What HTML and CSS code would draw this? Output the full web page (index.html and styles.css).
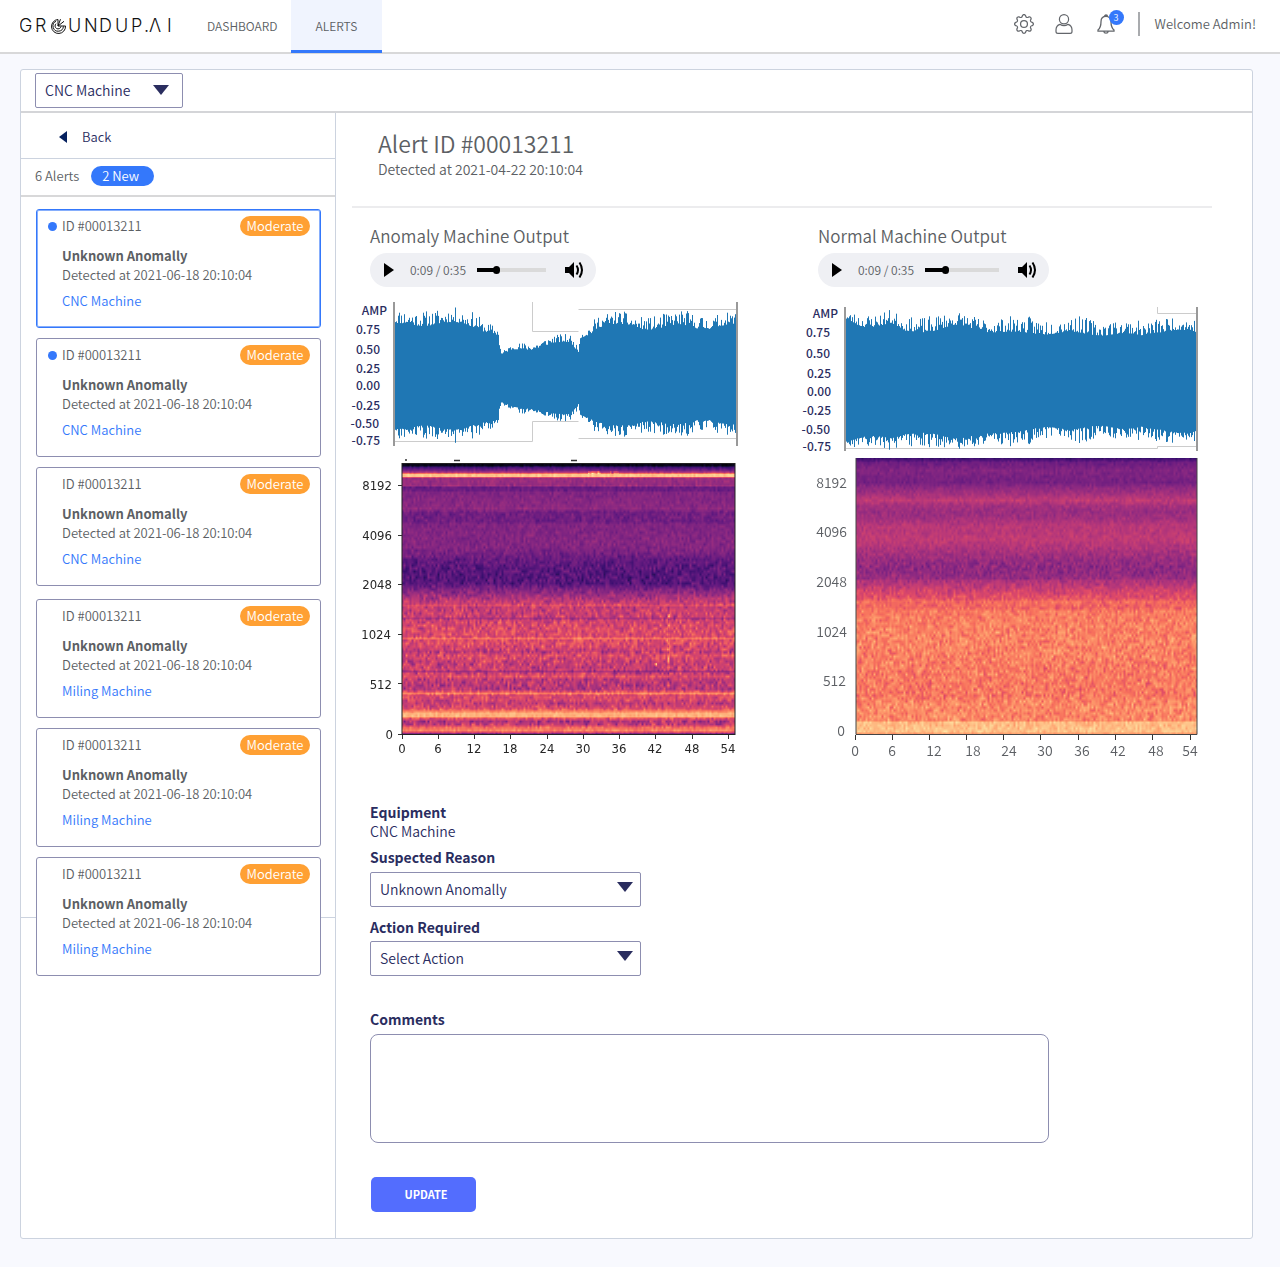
FILE: index.html
```html
<!DOCTYPE html>
<html lang="en">
<head>
<meta charset="utf-8">
<meta name="viewport" content="width=device-width, initial-scale=1">
<title>Groundup.AI – Alerts</title>
<link rel="stylesheet" href="styles.css">
</head>
<body>
<header class="topbar">
  <a class="logo" href="#" aria-label="GROUNDUP.AI">
    <svg width="154" height="20" viewBox="0 0 154 20">
      <text class="wordmark" y="15" x="-1 15">GR</text>
      <g fill="none" stroke="#111" stroke-width="1">
        <path d="M38 2.500a7 7 0 1 0 7.500 6.500h-7.500"/>
        <path d="M36 4.300a5.200 5.200 0 1 0 7.400 5"/>
        <path d="M36 6.700a3 3 0 1 0 5 2.800"/>
        <path d="M38 2.500v6.500M40.500 2.200L38 9M44 4.300L38 9"/>
      </g>
      <text class="wordmark" y="15" x="48 64 79 95 111 124 129 147">UNDUP.ΛI</text>
    </svg>
  </a>
  <nav class="tabs">
    <a class="tab" href="#">DASHBOARD</a>
    <a class="tab tab-active" href="#" aria-current="page">ALERTS</a>
  </nav>
  <div class="account">
    <button class="icon-button" aria-label="Settings">
      <svg width="20" height="20" viewBox="0 0 16 16" fill="#63666b"><path d="M8 4.754a3.246 3.246 0 1 0 0 6.492 3.246 3.246 0 0 0 0-6.492M5.754 8a2.246 2.246 0 1 1 4.492 0 2.246 2.246 0 0 1-4.492 0"/><path d="M9.796 1.343c-.527-1.790-3.065-1.790-3.592 0l-.094.319a.873.873 0 0 1-1.255.520l-.292-.160c-1.640-.892-3.433.902-2.540 2.541l.159.292a.873.873 0 0 1-.520 1.255l-.319.094c-1.790.527-1.790 3.065 0 3.592l.319.094a.873.873 0 0 1 .520 1.255l-.160.292c-.892 1.640.901 3.434 2.541 2.540l.292-.159a.873.873 0 0 1 1.255.520l.094.319c.527 1.790 3.065 1.790 3.592 0l.094-.319a.873.873 0 0 1 1.255-.520l.292.160c1.640.893 3.434-.902 2.540-2.541l-.159-.292a.873.873 0 0 1 .520-1.255l.319-.094c1.790-.527 1.790-3.065 0-3.592l-.319-.094a.873.873 0 0 1-.520-1.255l.160-.292c.893-1.640-.902-3.433-2.541-2.540l-.292.159a.873.873 0 0 1-1.255-.520zm-2.633.283c.246-.835 1.428-.835 1.674 0l.094.319a1.873 1.873 0 0 0 2.693 1.115l.291-.160c.764-.415 1.600.420 1.184 1.185l-.159.292a1.873 1.873 0 0 0 1.116 2.692l.318.094c.835.246.835 1.428 0 1.674l-.319.094a1.873 1.873 0 0 0-1.115 2.693l.160.291c.415.764-.420 1.600-1.185 1.184l-.291-.159a1.873 1.873 0 0 0-2.693 1.116l-.094.318c-.246.835-1.428.835-1.674 0l-.094-.319a1.873 1.873 0 0 0-2.692-1.115l-.292.160c-.764.415-1.600-.420-1.184-1.185l.159-.291A1.873 1.873 0 0 0 1.945 8.930l-.319-.094c-.835-.246-.835-1.428 0-1.674l.319-.094A1.873 1.873 0 0 0 3.060 4.377l-.160-.292c-.415-.764.420-1.600 1.185-1.184l.292.159a1.873 1.873 0 0 0 2.692-1.115z"/></svg>
    </button>
    <button class="icon-button" aria-label="Profile">
      <svg width="20" height="20" viewBox="0 0 20 20" fill="none" stroke="#63666b" stroke-width="1.200"><circle cx="10" cy="5.200" r="4.600"/><path d="M6 10.300C3.500 11 2 13 2 16v1.500c0 1.200.7 1.900 1.900 1.900h12.200c1.200 0 1.900-.7 1.900-1.900V16c0-3-1.500-5-4-5.700-2.400 1.700-5.600 1.700-8 0z"/></svg>
    </button>
    <button class="icon-button bell" aria-label="Notifications, 3 new">
      <svg width="20" height="20" viewBox="0 0 20 20" fill="none" stroke="#63666b" stroke-width="1.300"><path d="M8.500 2.500a1.500 1.500 0 0 1 3 0M10 2.400c-3.200 0-5 2.300-5 5.300 0 4.800-.9 6.500-3 8.400v1h16v-1c-2.100-1.900-3-3.600-3-8.400 0-3-1.800-5.300-5-5.300zM7.800 17.300c.3 2.500 4.100 2.500 4.400 0"/></svg>
      <span class="bell-count">3</span>
    </button>
    <span class="welcome">Welcome Admin!</span>
  </div>
</header>

<main class="panel">
  <div class="toolbar">
    <select class="select select-machine" aria-label="Machine"><option>CNC Machine</option><option>Miling Machine</option></select>
  </div>
  <div class="columns">
    <aside class="sidebar">
      <a class="back" href="#"><svg width="8" height="12" viewBox="0 0 8 12"><path d="M8 0v12L0 6z" fill="#06215f"/></svg>Back</a>
      <div class="summary"><span>6 Alerts</span><span class="new-pill">2 New</span></div>
      <div class="cards">
        <div class="card-group">
          <article class="card card-selected">
            <div class="card-top"><i class="dot"></i><span class="card-id">ID #00013211</span><span class="severity">Moderate</span></div>
            <h3>Unknown Anomally</h3><p>Detected at 2021-06-18 20:10:04</p><a href="#">CNC Machine</a>
          </article>
          <article class="card">
            <div class="card-top"><i class="dot"></i><span class="card-id">ID #00013211</span><span class="severity">Moderate</span></div>
            <h3>Unknown Anomally</h3><p>Detected at 2021-06-18 20:10:04</p><a href="#">CNC Machine</a>
          </article>
          <article class="card">
            <div class="card-top"><i class="dot dot-read"></i><span class="card-id">ID #00013211</span><span class="severity">Moderate</span></div>
            <h3>Unknown Anomally</h3><p>Detected at 2021-06-18 20:10:04</p><a href="#">CNC Machine</a>
          </article>
        </div>
        <div class="card-group">
          <article class="card">
            <div class="card-top"><i class="dot dot-read"></i><span class="card-id">ID #00013211</span><span class="severity">Moderate</span></div>
            <h3>Unknown Anomally</h3><p>Detected at 2021-06-18 20:10:04</p><a href="#">Miling Machine</a>
          </article>
          <article class="card">
            <div class="card-top"><i class="dot dot-read"></i><span class="card-id">ID #00013211</span><span class="severity">Moderate</span></div>
            <h3>Unknown Anomally</h3><p>Detected at 2021-06-18 20:10:04</p><a href="#">Miling Machine</a>
          </article>
          <article class="card">
            <div class="card-top"><i class="dot dot-read"></i><span class="card-id">ID #00013211</span><span class="severity">Moderate</span></div>
            <h3>Unknown Anomally</h3><p>Detected at 2021-06-18 20:10:04</p><a href="#">Miling Machine</a>
          </article>
        </div>
      </div>
    </aside>

    <section class="detail">
      <div class="detail-head">
        <h1>Alert ID #00013211</h1>
        <p>Detected at 2021-04-22 20:10:04</p>
      </div>
      <div class="outputs">
        <section class="output">
          <h2>Anomaly Machine Output</h2>
          <div class="player">
            <button class="play" aria-label="Play"><svg width="10" height="14" viewBox="0 0 10 14"><path d="M0 0l10 7-10 7z"/></svg></button>
            <span class="time">0:09 / 0:35</span>
            <input class="seek" type="range" min="0" max="35" value="9" aria-label="Seek">
            <button class="volume" aria-label="Volume"><svg width="19" height="18" viewBox="0 0 19 18"><path d="M0 6h4l5-5v16l-5-5H0z"/><path d="M11.500 4.500q3 4.500 0 9M14.500 1.500q5 7.500 0 15" fill="none" stroke="#000" stroke-width="2"/></svg></button>
          </div>
          <svg class="chart" width="400" height="156" role="img" aria-label="Anomaly amplitude">
            <g class="amp-labels">
              <text x="35" y="19">AMP</text><text x="28" y="38">0.75</text><text x="28" y="58">0.50</text><text x="28" y="77">0.25</text><text x="28" y="94">0.00</text><text x="28" y="114">-0.25</text><text x="27" y="132">-0.50</text><text x="28" y="149">-0.75</text>
            </g>
            <path class="frame" d="M180.500 6v29.500h46M226.500 13.500h158M42 145.500h138.500v-20h46M226.500 142.500h158"/>
            <path class="wave" id="wave-anomaly"/>
            <path class="edge" d="M42 6v144M385 6v144"/>
          </svg>
          <svg class="chart" width="400" height="312" role="img" aria-label="Anomaly spectrogram">
            <path d="M53 8h2M102 8.500h6M219 8.500h6" stroke="#333" stroke-width="1.500"/>
            <foreignObject x="50" y="11" width="333" height="272"><canvas id="spec-anomaly" width="333" height="272"></canvas></foreignObject>
            <rect x="50" y="11.500" width="333" height="271" fill="none" stroke="#222"/>
            <path class="ticks" d="M46 33.500h4M46 83.500h4M46 132.500h4M46 182.500h4M46 231.500h4M46 282.500h4M50.500 283v4M86.500 283v4M122.500 283v4M158.500 283v4M195.500 283v4M231.500 283v4M267.500 283v4M303.500 283v4M340.500 283v4M376.500 283v4"/>
            <g class="plot-labels plot-y"><text x="40" y="38">8192</text><text x="40" y="88">4096</text><text x="40" y="137">2048</text><text x="39" y="187">1024</text><text x="40" y="237">512</text><text x="41" y="287">0</text></g>
            <g class="plot-labels"><text x="50" y="301">0</text><text x="86" y="301">6</text><text x="122" y="301">12</text><text x="158" y="301">18</text><text x="195" y="301">24</text><text x="231" y="301">30</text><text x="267" y="301">36</text><text x="303" y="301">42</text><text x="340" y="301">48</text><text x="376" y="301">54</text></g>
          </svg>
        </section>
        <section class="output">
          <h2>Normal Machine Output</h2>
          <div class="player player-wide">
            <button class="play" aria-label="Play"><svg width="10" height="14" viewBox="0 0 10 14"><path d="M0 0l10 7-10 7z"/></svg></button>
            <span class="time">0:09 / 0:35</span>
            <input class="seek" type="range" min="0" max="35" value="9" aria-label="Seek">
            <button class="volume" aria-label="Volume"><svg width="19" height="18" viewBox="0 0 19 18"><path d="M0 6h4l5-5v16l-5-5H0z"/><path d="M11.500 4.500q3 4.500 0 9M14.500 1.500q5 7.500 0 15" fill="none" stroke="#000" stroke-width="2"/></svg></button>
          </div>
          <svg class="chart" width="400" height="156" role="img" aria-label="Normal amplitude">
            <g class="amp-labels">
              <text x="38" y="22">AMP</text><text x="30" y="41">0.75</text><text x="30" y="62">0.50</text><text x="31" y="82">0.25</text><text x="31" y="100">0.00</text><text x="31" y="119">-0.25</text><text x="30" y="138">-0.50</text><text x="31" y="155">-0.75</text>
            </g>
            <path class="frame" d="M357.500 11v6.500h40M45 152.500h312.500v-2h40"/>
            <path class="wave" id="wave-normal"/>
            <path class="edge" d="M45 11v144M397 11v144"/>
          </svg>
          <svg class="chart" width="400" height="312" role="img" aria-label="Normal spectrogram">
            <foreignObject x="56" y="6" width="341" height="277"><canvas id="spec-normal" width="341" height="277"></canvas></foreignObject>
            <path d="M56 6v276.500h341V6" fill="none" stroke="#444"/>
            <path class="ticks" d="M55.500 283v5M92.500 283v5M129.500 283v5M166.500 283v5M203.500 283v5M240.500 283v5M278.500 283v5M315.500 283v5M352.500 283v5M390.500 283v5"/>
            <g class="axis-labels plot-y"><text x="47" y="36">8192</text><text x="47" y="85">4096</text><text x="47" y="135">2048</text><text x="47" y="185">1024</text><text x="46" y="234">512</text><text x="45" y="284">0</text></g>
            <g class="axis-labels"><text x="55" y="304">0</text><text x="92" y="304">6</text><text x="134" y="304">12</text><text x="173" y="304">18</text><text x="209" y="304">24</text><text x="245" y="304">30</text><text x="282" y="304">36</text><text x="318" y="304">42</text><text x="356" y="304">48</text><text x="390" y="304">54</text></g>
          </svg>
        </section>
      </div>
      <form class="form">
        <strong>Equipment</strong>
        <span class="equipment">CNC Machine</span>
        <label for="reason">Suspected Reason</label>
        <select class="select" id="reason"><option>Unknown Anomally</option></select>
        <label for="action">Action Required</label>
        <select class="select" id="action"><option>Select Action</option></select>
        <label class="comments-label" for="comments">Comments</label>
        <textarea id="comments"></textarea>
        <button class="update" type="button">UPDATE</button>
      </form>
    </section>
  </div>
</main>
<script src="charts.js"></script>
</body>
</html>
```
FILE: styles.css
```css
* { box-sizing: border-box; }
body {
  margin: 0;
  padding-bottom: 28px;
  background: #f8f9fe;
  color: #5c5f64;
  font-family: "Noto Sans CJK JP", "Noto Sans", sans-serif;
  font-size: 13px;
  font-weight: 350;
  line-height: 19px;
}
h1, h2, h3, p { margin: 0; font-weight: 350; }
a { color: inherit; text-decoration: none; }
button, select, textarea { font: inherit; color: inherit; }
button { padding: 0; border: 0; background: none; }
svg { display: block; }

.topbar {
  display: flex;
  height: 54px;
  border-bottom: 2px solid #d8d8d9;
  background: #fff;
}
.logo { padding: 17px 0 0 20px; }
.wordmark { font: 300 18px Inter, sans-serif; fill: #111; }
.tabs { display: flex; margin-left: 20px; font-size: 12px; }
.tab { height: 53px; padding: 16px 13px 0; }
.tab-active {
  padding: 16px 25px 0;
  border-bottom: 3px solid #3478fb;
  background: #f0f4fe;
}
.account {
  display: flex;
  align-items: center;
  gap: 20px;
  height: 48px;
  margin-left: auto;
  padding-right: 24px;
}
.bell { position: relative; margin-left: 2px; }
.bell-count {
  position: absolute;
  top: -4px;
  right: -8px;
  width: 15px;
  height: 15px;
  border-radius: 8px;
  background: #3478fb;
  color: #fff;
  font-size: 9px;
  line-height: 15px;
}
.welcome {
  margin-left: 2px;
  padding-left: 15px;
  border-left: 2px solid #a9abae;
  line-height: 24px;
}

.panel {
  margin: 15px 27px 0 20px;
  border: 1px solid #ccd3df;
  border-radius: 3px;
  background: #fff;
}
.toolbar {
  height: 43px;
  padding: 3px 14px 0;
  border-bottom: 2px solid #d4d5d8;
}
.select {
  width: 271px;
  height: 35px;
  padding: 0 9px 1px;
  border: 1px solid #8d8eb0;
  border-radius: 2px;
  appearance: none;
  background: #fff url("data:image/svg+xml,%3Csvg xmlns='http://www.w3.org/2000/svg' width='16' height='10'%3E%3Cpath d='M0 0h16L8 10z' fill='%232a2d5f'/%3E%3C/svg%3E") no-repeat right 7px top 9px;
  color: #2a2d5f;
  font-size: 14px;
}
.select-machine { width: 148px; background-position: right 13px top 11px; }
.columns { display: flex; }
.sidebar { width: 315px; border-right: 1px solid #ccd3df; }
.back {
  display: flex;
  align-items: center;
  gap: 15px;
  height: 46px;
  padding: 2px 0 0 38px;
  border-bottom: 1px solid #ccd3df;
  color: #2a2d5f;
}
.summary {
  display: flex;
  align-items: center;
  gap: 12px;
  height: 38px;
  padding: 0 14px 3px;
  border-bottom: 2px solid #d8d8d9;
}
.new-pill {
  width: 63px;
  height: 20px;
  padding-left: 11px;
  border-radius: 10px;
  background: #3478fb;
  color: #fff;
  line-height: 20px;
}
.cards {
  display: grid;
  gap: 13px;
  padding: 12px 14px 0 15px;
  background: linear-gradient(#ccd3df, #ccd3df) 0 720px / 100% 1px no-repeat;
}
.card-group { display: grid; gap: 10px; }
.card {
  height: 119px;
  padding: 6px 10px 0 25px;
  border: 1px solid #8d8eb0;
  border-radius: 3px;
  background: #fff;
}
.card-selected { border-color: #3478fb; box-shadow: inset 0 0 0 1px #86aefc; }
.card-top { display: flex; align-items: center; height: 20px; margin: 0 0 10px -14px; }
.card-id { line-height: 20px; }
.dot { width: 9px; height: 9px; margin-right: 5px; border-radius: 5px; background: #3478fb; }
.dot-read { visibility: hidden; }
.severity {
  width: 70px;
  margin-left: auto;
  border-radius: 10px;
  background: #ffa033;
  color: #fff;
  line-height: 20px;
  text-align: center;
}
.card h3 { font-size: 13px; font-weight: 700; }
.card a { display: block; margin-top: 7px; color: #3478fb; }

.detail { flex: 1; padding: 0 16px 26px; }
.detail-head {
  height: 95px;
  margin-right: 24px;
  padding: 13px 0 0 26px;
  border-bottom: 2px solid #ececee;
}
h1 { font-size: 23px; line-height: 34px; }
.detail-head p { font-size: 14px; }
.outputs { display: grid; grid-template-columns: 448px 400px; }
h2 { padding: 15px 0 5px 18px; font-size: 17px; line-height: 25px; }
.player {
  display: flex;
  align-items: center;
  width: 226px;
  height: 34px;
  margin: 0 0 9px 18px;
  padding: 0 12px 0 14px;
  border-radius: 17px;
  background: #eff0f4;
}
.player-wide { width: 231px; }
.time { margin-left: 16px; font-size: 12px; line-height: 20px; }
.seek {
  flex: 1;
  width: 60px;
  height: 8px;
  margin: 0 19px 0 11px;
  appearance: none;
  background: linear-gradient(90deg, #000 26%, #dadada 26%) center / 100% 4px no-repeat;
}
.seek::-webkit-slider-thumb {
  width: 7px;
  height: 8px;
  appearance: none;
  border-radius: 4px;
  background: #000;
}
.chart { overflow: visible; }
.chart text { text-anchor: middle; }
.chart .amp-labels text, .chart .plot-y text { text-anchor: end; }
.amp-labels { font-size: 12px; font-weight: 500; fill: #2a2d5f; }
.plot-labels { font-family: "DejaVu Sans Condensed", "DejaVu Sans", sans-serif; font-size: 13px; fill: #262626; }
.axis-labels { font-size: 14px; fill: #5c5f64; }
.frame { fill: none; stroke: #ccc; }
.edge { stroke: #999; stroke-width: 2; }
.ticks { stroke: #333; }
.wave { fill: none; stroke: #1f77b4; }
canvas { display: block; }

.form {
  display: flex;
  flex-direction: column;
  align-items: flex-start;
  padding: 39px 0 0 18px;
  color: #2a2d5f;
  font-size: 14px;
}
.form label, .form strong { font-weight: 700; }
.equipment { margin-bottom: 7px; }
.form .select { margin: 5px 0 11px; }
.form #action { margin-top: 4px; }
.form .comments-label { margin-top: 23px; }
textarea {
  width: 100%;
  max-width: 679px;
  height: 109px;
  margin: 5px 0 34px;
  border: 1px solid #8d8eb0;
  border-radius: 8px;
  resize: none;
}
.update {
  width: 105px;
  height: 35px;
  margin-left: 1px;
  padding-left: 5px;
  border-radius: 5px;
  background: #536dfe;
  color: #fff;
  font-size: 11px;
  font-weight: 700;
}
```
FILE: charts.js
```js
// Seeded generator, so a recording always draws the same way.
function seeded(seed) {
  return function () {
    seed = (seed * 1664525 + 1013904223) >>> 0;
    return seed / 4294967296;
  };
}

function interpolate(points, at) {
  for (let i = 1; i < points.length; i++) {
    if (at <= points[i][0]) {
      const a = points[i - 1], b = points[i];
      const k = (at - a[0]) / (b[0] - a[0]);
      return a.slice(1).map((v, n) => v + (b[n + 1] - v) * k);
    }
  }
  return points[points.length - 1].slice(1);
}

// Envelope points: x, top, bottom, height of the spikes.
function drawWave(id, envelope, seed) {
  const random = seeded(seed);
  const first = envelope[0][0], last = envelope[envelope.length - 1][0];
  let d = "";
  for (let x = first; x <= last; x++) {
    const [top, bottom, spike] = interpolate(envelope, x);
    const s = Math.pow(random(), 2) * spike;
    const wobble = Math.sin(x / 9) * spike / 8;
    d += "M" + (x + 0.5) + " " + (top - s + wobble).toFixed(1) + "V" + (bottom + s * 0.9 - wobble).toFixed(1);
  }
  document.getElementById(id).setAttribute("d", d);
}

const magma = [
  [0, 0, 0, 4], [0.1, 20, 14, 54], [0.2, 59, 15, 112], [0.3, 100, 26, 128],
  [0.4, 140, 41, 129], [0.5, 183, 55, 121], [0.6, 222, 73, 104],
  [0.7, 247, 112, 92], [0.8, 254, 159, 109], [0.9, 254, 207, 146], [1, 252, 253, 191]
];

// Profile points: row, level, noise.
function drawSpectrogram(id, profile, seed, events) {
  const canvas = document.getElementById(id);
  const context = canvas.getContext("2d");
  const { width, height } = canvas;
  const image = context.createImageData(width, height);
  const random = seeded(seed);
  const columns = Math.ceil(width / 2) + 2;
  const rows = Math.ceil(height / 3) + 2;
  const grid = Array.from({ length: columns * rows }, () => random() + random() - 1);
  for (let y = 0; y < height; y++) {
    const [level, noise] = interpolate(profile, y);
    const gy = y / 3, y0 = Math.floor(gy), fy = gy - y0;
    for (let x = 0; x < width; x++) {
      const gx = x / 2, x0 = Math.floor(gx), fx = gx - x0;
      const at = (c, r) => grid[r * columns + c];
      const n = (at(x0, y0) * (1 - fx) + at(x0 + 1, y0) * fx) * (1 - fy)
        + (at(x0, y0 + 1) * (1 - fx) + at(x0 + 1, y0 + 1) * fx) * fy;
      let t = level + n * noise;
      for (const e of events) {
        if (Math.abs(x - e[0]) < e[1] && y > e[2] && y < e[3]) t += e[4] * (0.5 + n);
      }
      const [r, g, b] = interpolate(magma, Math.max(0, Math.min(1, t)));
      const i = (y * width + x) * 4;
      image.data[i] = r;
      image.data[i + 1] = g;
      image.data[i + 2] = b;
      image.data[i + 3] = 255;
    }
  }
  context.putImageData(image, 0, 0);
}

drawWave("wave-anomaly", [
  [42, 29, 131, 14], [60, 28, 132, 16], [84, 28, 131, 15], [110, 28, 132, 15], [125, 30, 130, 15],
  [130, 34, 128, 10], [140, 37, 125, 9], [146, 40, 123, 7], [146.5, 42, 121, 5], [147, 50, 112, 6],
  [149, 59, 105, 3], [160, 54, 110, 6], [180, 53, 114, 8], [200, 47, 117, 8], [218, 47, 117, 8],
  [224, 54, 111, 5], [226, 56, 108, 4], [228, 42, 119, 8], [238, 37, 124, 10], [246, 30, 128, 14],
  [266, 29, 128, 13], [288, 32, 127, 12], [300, 32, 127, 13], [330, 30, 126, 15], [350, 32, 125, 15],
  [370, 30, 127, 12], [384, 29, 127, 12]
], 11);
drawWave("wave-normal", [
  [45, 24, 144, 7], [60, 30, 142, 13], [90, 28, 141, 14], [105, 36, 137, 13], [130, 34, 139, 16],
  [160, 30, 141, 13], [190, 35, 139, 14], [210, 38, 134, 16], [235, 36, 134, 17], [260, 38, 131, 18],
  [290, 37, 132, 16], [315, 39, 131, 15], [341, 39, 131, 14], [355, 35, 135, 15], [396, 36, 135, 14]
], 23);

drawSpectrogram("spec-anomaly", [
  [0, 0.03, 0.05], [2, 0.05, 0.05], [4, 0.22, 0.06], [7, 0.35, 0.06], [9, 0.5, 0.06], [10, 0.7, 0.08],
  [11, 0.88, 0.06], [13, 0.88, 0.06], [14, 0.6, 0.06], [15, 0.44, 0.06], [21, 0.42, 0.06], [22, 0.44, 0.1],
  [24, 0.31, 0.06], [27, 0.32, 0.06], [29, 0.37, 0.06], [43, 0.39, 0.06], [45, 0.41, 0.06],
  [49, 0.33, 0.08], [58, 0.33, 0.08], [61, 0.37, 0.06], [82, 0.38, 0.08], [89, 0.35, 0.08],
  [96, 0.3, 0.1], [107, 0.27, 0.12], [120, 0.26, 0.12], [123, 0.31, 0.1], [127, 0.38, 0.1],
  [135, 0.48, 0.13], [140, 0.54, 0.15], [142, 0.6, 0.15], [144, 0.54, 0.16], [153, 0.55, 0.16],
  [155, 0.48, 0.14], [157, 0.56, 0.16], [166, 0.6, 0.16], [173, 0.59, 0.14], [175, 0.7, 0.12],
  [177, 0.61, 0.14], [184, 0.58, 0.17], [188, 0.52, 0.18], [192, 0.59, 0.17], [200, 0.54, 0.18],
  [206, 0.55, 0.17], [208, 0.45, 0.14], [210, 0.55, 0.16], [213, 0.62, 0.14], [216, 0.51, 0.16],
  [226, 0.51, 0.17], [228, 0.6, 0.14], [230, 0.74, 0.12], [232, 0.6, 0.14], [236, 0.59, 0.14],
  [240, 0.52, 0.16], [245, 0.6, 0.14], [247, 0.7, 0.08], [250, 0.84, 0.06], [253, 0.84, 0.06],
  [255, 0.62, 0.12], [258, 0.48, 0.18], [261, 0.52, 0.18], [264, 0.68, 0.1], [267, 0.74, 0.08],
  [269, 0.6, 0.1], [271, 0.2, 0.05]
], 7, [[266, 2, 150, 226, 0.14], [253, 2, 199, 204, 0.3], [192, 7, 7, 11, 0.25], [212, 5, 7, 11, 0.2]]);
drawSpectrogram("spec-normal", [
  [0, 0.2, 0.05], [4, 0.32, 0.05], [12, 0.37, 0.05], [24, 0.34, 0.05], [28, 0.39, 0.05], [35, 0.45, 0.05],
  [42, 0.52, 0.06], [47, 0.46, 0.06], [53, 0.43, 0.06], [60, 0.45, 0.06], [67, 0.5, 0.06], [82, 0.52, 0.06],
  [92, 0.47, 0.07], [102, 0.42, 0.08], [109, 0.4, 0.1], [120, 0.42, 0.08], [122, 0.47, 0.08],
  [132, 0.56, 0.1], [140, 0.62, 0.1], [143, 0.68, 0.1], [149, 0.67, 0.1], [153, 0.72, 0.1],
  [175, 0.74, 0.12], [200, 0.73, 0.13], [222, 0.72, 0.13], [238, 0.71, 0.13], [245, 0.75, 0.12],
  [262, 0.75, 0.12], [264, 0.86, 0.08], [273, 0.87, 0.08], [276, 0.77, 0.06]
], 41, []);
```
